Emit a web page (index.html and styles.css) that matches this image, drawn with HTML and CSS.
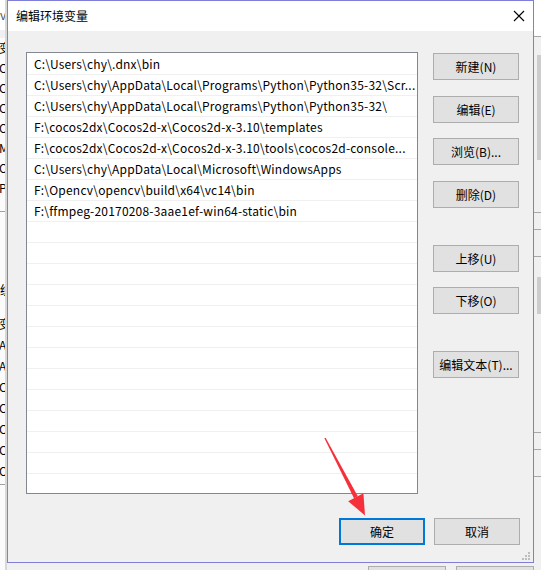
FILE: index.html
```html
<!DOCTYPE html>
<html lang="zh-CN">
<head>
<meta charset="utf-8">
<title>编辑环境变量</title>
<link rel="stylesheet" href="styles.css">
</head>
<body>
<div class="screen">
  <div class="behind-left">
    <div class="bl-title">v</div>
    <div class="bl-bar"></div>
    <div class="bl-list">
      <div>变</div><div>CO</div><div>CO</div><div>CO</div><div>OI</div><div>M</div><div>O</div><div>Pa</div>
    </div>
    <div class="bl-sep"></div>
    <div class="bl-head">统</div>
    <div class="bl-list bl-list2">
      <div>变</div><div>AD</div><div>AD</div><div>CI</div><div>CI</div><div>Co</div><div>CO</div><div>O:</div>
    </div>
    <div class="bl-sep bl-sep2"></div>
  </div>

  <div class="dialog">
    <div class="titlebar">
      <span class="title">编辑环境变量</span>
      <svg class="close" width="12" height="12" viewBox="0 0 12 12"><path d="M1 1L11 11M11 1L1 11" stroke="#000" stroke-width="1.1" fill="none"/></svg>
    </div>
    <div class="body">
      <div class="main">
        <div class="list">
          <div class="row">C:\Users\chy\.dnx\bin</div>
          <div class="row">C:\Users\chy\AppData\Local\Programs\Python\Python35-32\Scr...</div>
          <div class="row">C:\Users\chy\AppData\Local\Programs\Python\Python35-32\</div>
          <div class="row">F:\cocos2dx\Cocos2d-x\Cocos2d-x-3.10\templates</div>
          <div class="row">F:\cocos2dx\Cocos2d-x\Cocos2d-x-3.10\tools\cocos2d-console...</div>
          <div class="row">C:\Users\chy\AppData\Local\Microsoft\WindowsApps</div>
          <div class="row">F:\Opencv\opencv\build\x64\vc14\bin</div>
          <div class="row">F:\ffmpeg-20170208-3aae1ef-win64-static\bin</div>
          <div class="row"></div><div class="row"></div><div class="row"></div><div class="row"></div>
          <div class="row"></div><div class="row"></div><div class="row"></div><div class="row"></div>
          <div class="row"></div><div class="row"></div><div class="row"></div><div class="row"></div>
          <div class="row"></div>
        </div>
        <div class="side">
          <div class="btn">新建(N)</div>
          <div class="btn">编辑(E)</div>
          <div class="btn btn-tight">浏览(B)...</div>
          <div class="btn">删除(D)</div>
          <div class="btn btn-sep">上移(U)</div>
          <div class="btn btn-tight">下移(O)</div>
          <div class="btn btn-sep">编辑文本(T)...</div>
        </div>
      </div>
      <div class="footer">
        <div class="btn btn-default">确定</div>
        <div class="btn">取消</div>
      </div>
    </div>
    <svg class="grip" width="10" height="10" viewBox="0 0 10 10">
      <rect x="7" y="1" width="2" height="2" fill="#bdbdbd"/>
      <rect x="4" y="4" width="2" height="2" fill="#bdbdbd"/>
      <rect x="7" y="4" width="2" height="2" fill="#bdbdbd"/>
      <rect x="1" y="7" width="2" height="2" fill="#bdbdbd"/>
      <rect x="4" y="7" width="2" height="2" fill="#bdbdbd"/>
      <rect x="7" y="7" width="2" height="2" fill="#bdbdbd"/>
    </svg>
  </div>

  <div class="behind-right">
    <div class="br-top"></div>
    <div class="br-line"></div>
    <div class="br-scroll"></div>
    <div class="br-line br-l2"></div>
    <div class="br-line br-l3"></div>
    <div class="br-line br-l4"></div>
    <div class="br-scroll br-s2"></div>
    <div class="br-line br-l5"></div>
    <div class="br-line br-l6"></div>
    <div class="br-line br-l7"></div>
  </div>

  <div class="behind-bottom">
    <div class="bb-btn bb-a"></div>
    <div class="bb-btn bb-b"></div>
  </div>

  <svg class="arrow" width="541" height="570" viewBox="0 0 541 570">
    <polygon points="324.4,438.3 325.6,437.7 357.8,496.2 354.0,498.2" fill="#f6303a"/>
    <polygon points="365,515.5 348.2,501.2 363.4,493.2" fill="#f6303a"/>
  </svg>
</div>
</body>
</html>
```

FILE: styles.css
```css
* { box-sizing: border-box; }
html, body { margin: 0; padding: 0; }
body {
  width: 541px;
  height: 570px;
  overflow: hidden;
  background: #f0f0f0;
  font-family: "Noto Sans CJK SC", "Noto Sans", sans-serif;
  font-size: 12px;
  color: #000;
}
.screen {
  position: relative;
  width: 541px;
  height: 570px;
  display: grid;
  grid-template-columns: 7px 527px 7px;
  grid-template-rows: 563px 7px;
}

/* behind windows */
.behind-left {
  grid-column: 1;
  grid-row: 1 / 3;
  background: #fbfbfb;
  overflow: hidden;
  border-right: 2px solid #d8d8d8;
  display: flex;
  flex-direction: column;
}
.bl-title { height: 30px; line-height: 30px; color: #555; background: #fff; flex: none; }
.bl-bar { height: 8px; background: #f0f0f0; flex: none; }
.bl-list div { height: 20px; line-height: 20px; white-space: nowrap; margin-left: -1px; }
.bl-list { flex: none; }
.bl-sep { height: 1px; background: #a0a0a0; margin-top: 13px; flex: none; }
.bl-head { height: 80px; line-height: 156px; flex: none; }
.bl-list2 { margin-top: 21px; }
.bl-list2 div { height: 21px; line-height: 21px; }
.bl-sep2 { margin-top: 3px; }

.behind-right {
  grid-column: 3;
  grid-row: 1 / 3;
  background: #f0f0f0;
  display: flex;
  flex-direction: column;
  overflow: hidden;
}
.br-top { height: 36px; background: #fff; flex: none; }
.br-line { height: 1px; background: #a8a8a8; flex: none; }
.br-scroll { width: 4px; margin-left: 3px; height: 105px; margin-top: 18px; background: #cdcdcd; flex: none; }
.br-l2 { margin-top: 52px; }
.br-l3 { margin-top: 16px; }
.br-l4 { margin-top: 26px; }
.br-s2 { margin-top: 20px; height: 37px; }
.br-l5 { margin-top: 118px; }
.br-l6 { margin-top: 16px; }
.br-l7 { margin-top: 26px; }

.behind-bottom {
  grid-column: 2;
  grid-row: 2;
  background: #f0f0f0;
  display: flex;
  padding-left: 361px;
  padding-top: 3px;
  gap: 10px;
}
.bb-btn { width: 85px; height: 10px; border: 1px solid #adadad; background: #e1e1e1; }

/* dialog */
.dialog {
  grid-column: 2;
  grid-row: 1;
  position: relative;
  border: 1px solid #7f7fd9;
  background: #f0f0f0;
  display: flex;
  flex-direction: column;
}
.titlebar {
  height: 30px;
  background: #fff;
  display: flex;
  align-items: center;
  justify-content: space-between;
  padding-left: 8px;
  padding-right: 8px;
}
.title { font-size: 12px; line-height: 16px; }
.close { display: block; }

.body {
  flex: 1;
  padding: 21px 13px 16px 18px;
  display: flex;
  flex-direction: column;
}
.main {
  display: flex;
  gap: 15px;
}
.list {
  width: 392px;
  height: 442px;
  border: 1px solid #828790;
  background: #fff;
  padding-top: 1px;
  overflow: hidden;
}
.row {
  height: 21px;
  line-height: 20px;
  border-bottom: 1px solid #f0f0f0;
  padding-left: 7px;
  padding-right: 2px;
  white-space: nowrap;
  overflow: hidden;
  letter-spacing: 0.2px;
}
.side {
  width: 86px;
  padding-top: 1px;
  display: flex;
  flex-direction: column;
}
.btn {
  width: 86px;
  height: 27px;
  border: 1px solid #adadad;
  background: #e1e1e1;
  display: flex;
  align-items: center;
  justify-content: center;
  font-size: 12px;
  white-space: nowrap;
}
.side .btn + .btn { margin-top: 16px; }
.side .btn.btn-tight { margin-top: 15px; }
.side .btn.btn-sep { margin-top: 37px; }

.footer {
  margin-top: 24px;
  display: flex;
  justify-content: flex-end;
  gap: 9px;
}
.btn-default { border: 2px solid #0078d7; }

.grip {
  position: absolute;
  right: 2px;
  bottom: 1px;
}

.arrow {
  position: absolute;
  left: 0;
  top: 0;
  pointer-events: none;
}
```
